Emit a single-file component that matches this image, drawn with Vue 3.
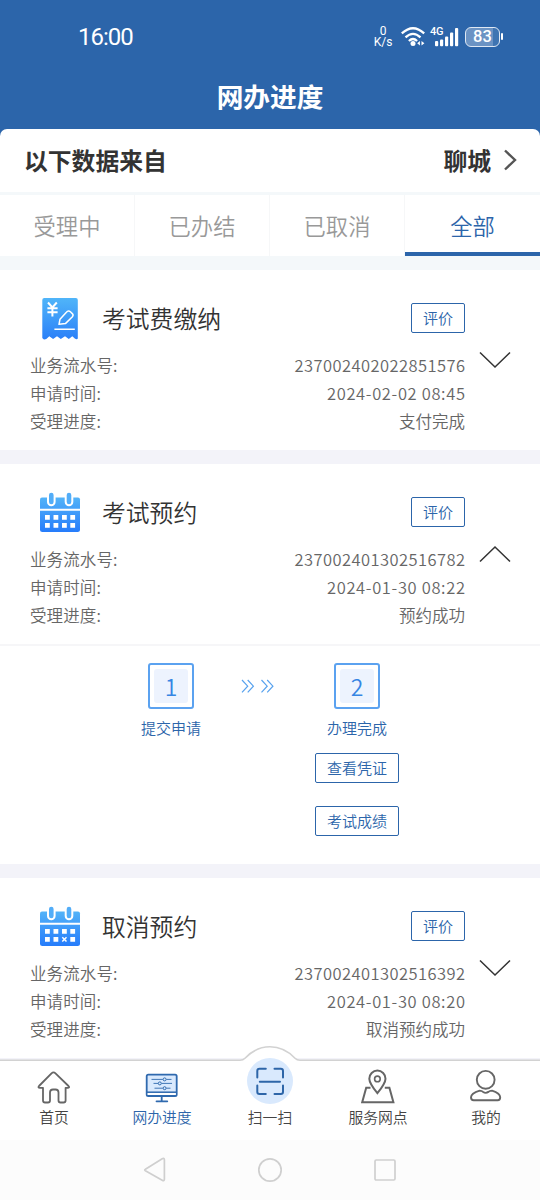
<script setup>
const tabs = ['受理中', '已办结', '已取消', '全部']
const records = [
  { title: '考试费缴纳', icon: 'receipt', no: '237002402022851576', time: '2024-02-02 08:45', status: '支付完成', open: false },
  { title: '考试预约', icon: 'calendar', no: '237002401302516782', time: '2024-01-30 08:22', status: '预约成功', open: true },
  { title: '取消预约', icon: 'cancel', no: '237002401302516392', time: '2024-01-30 08:20', status: '取消预约成功', open: false },
]
</script>

<template>
  <div class="screen">
    <header class="top">
      <div class="status">
        <span class="clock">16:00</span>
        <div class="indicators">
          <div class="speed"><span>0</span><span>K/s</span></div>
          <svg class="wifi" width="26" height="22" viewBox="0 0 26 22" fill="none" stroke="#fff" stroke-width="2.3">
            <path d="M.8 7.4Q12 -3 23.2 7.4" />
            <path d="M4.5 11.3Q12 4.4 19.5 11.3" />
            <path d="M7.9 15Q12 11 16.1 15" />
            <circle cx="12" cy="17.6" r="2.5" fill="#fff" stroke="none" />
            <path d="M16.2 17.2l2.7-2.3v4.6zM23.4 17.2l-2.9-2.3v4.6z" fill="#fff" stroke="none" />
          </svg>
          <div class="cell">
            <span class="gen">4G</span>
            <svg width="28" height="22" viewBox="0 0 28 22" fill="#fff">
              <rect x="4" y="15" width="3.2" height="5.2" rx="1" />
              <rect x="9" y="13.5" width="3.2" height="6.7" rx="1" />
              <rect x="14" y="10.5" width="3.2" height="9.7" rx="1" />
              <rect x="19" y="6.5" width="3.2" height="13.7" rx="1" />
              <rect x="24" y="2" width="3.2" height="18.2" rx="1" />
            </svg>
          </div>
          <div class="battery">83</div>
          <i class="battery-cap"></i>
        </div>
      </div>
      <h1>网办进度</h1>
    </header>

    <section class="panel">
      <div class="source">
        <span>以下数据来自</span>
        <div class="city">
          聊城
          <svg width="13" height="22" viewBox="0 0 13 22" fill="none" stroke="#555" stroke-width="2.4"><path d="M1 1.5 11 11 1 20.5" /></svg>
        </div>
      </div>
      <nav class="tabs">
        <div v-for="(t, i) in tabs" :key="t" class="tab" :class="{ active: i === 3 }">{{ t }}</div>
      </nav>
    </section>

    <main class="list">
      <article v-for="r in records" :key="r.title" class="card">
        <div class="head">
          <svg v-if="r.icon === 'receipt'" class="ico" width="42" height="44" viewBox="0 0 42 44">
            <defs><linearGradient id="g1" x1="0" y1="0" x2="0" y2="1"><stop offset="0" stop-color="#50b5f9" /><stop offset="1" stop-color="#2b80f8" /></linearGradient></defs>
            <path d="M5 1H35Q37 1 37 3V41.5Q36 43 34 41.5L31.5 39.2L28 42L24.2 39.2L20 42L16.2 39.2L12.3 42L8.5 39.2L5.5 42Q3 43 2 41.5L1.5 41V3Q1.5 1 3.5 1Z" transform="translate(.8 0)" fill="url(#g1)" />
            <g fill="none" stroke="#fff" stroke-width="2"><path d="M8 5.5 12.4 10.5 16.8 5.5M12.4 10V19.5M7.4 11.2H17.6M7.4 15.3H17.6" /></g>
            <g fill="none" stroke="#fff" stroke-width="1.5" stroke-linejoin="round"><path d="M19 27.3 20 22.2 26.4 15.2Q28.4 12.9 30.4 14.8L32.3 16.6Q33.8 18.2 32.4 19.7L25.4 26.6ZM14.4 32.2H34.8" /></g>
          </svg>
          <svg v-else class="ico" width="42" height="44" viewBox="0 0 42 44">
            <defs><linearGradient id="g2" x1="0" y1="0" x2="0" y2="1"><stop offset="0" stop-color="#53b3f8" /><stop offset="1" stop-color="#267cfb" /></linearGradient></defs>
            <path d="M2 6.5H38Q40 6.5 40 8.5V38.5Q40 41 37.5 41H2.5Q0 41 0 38.5V8.5Q0 6.5 2 6.5Z" fill="url(#g2)" />
            <path d="M0 18.8H40" stroke="#fff" stroke-width="2" />
            <path d="M11.3 4V11M29 4V11" stroke="#fff" stroke-width="8.6" stroke-linecap="round" />
            <path d="M11.3 4V11M29 4V11" stroke="#52adf8" stroke-width="4.6" stroke-linecap="round" />
            <path d="M5 24h4.8v4.8H5zM13.5 24h4.8v4.8h-4.8zM22 24h4.8v4.8H22zM30.3 24h4.8v4.8h-4.8zM5 32h4.8v4.8H5zM13.5 32h4.8v4.8h-4.8zM30.3 32h4.8v4.8h-4.8z" fill="#fff" />
            <path v-if="r.icon === 'calendar'" d="M22 32h4.8v4.8H22z" fill="#fff" />
            <path v-else d="M22.3 32.3 26.5 36.5M26.5 32.3 22.3 36.5" stroke="#fff" stroke-width="1.5" />
          </svg>
          <h2>{{ r.title }}</h2>
          <button class="btn rate">评价</button>
        </div>
        <div class="body">
          <dl>
            <div><dt>业务流水号:</dt><dd class="num">{{ r.no }}</dd></div>
            <div><dt>申请时间:</dt><dd class="date">{{ r.time }}</dd></div>
            <div><dt>受理进度:</dt><dd>{{ r.status }}</dd></div>
          </dl>
          <svg class="chev" :class="{ up: r.open }" width="32" height="18" viewBox="0 0 32 18" fill="none" stroke="#333" stroke-width="1.5"><path d="M1 1.5 16 16 31 1.5" /></svg>
        </div>
        <div v-if="r.open" class="steps">
          <div class="step">
            <div class="box"><span>1</span></div>
            <p>提交申请</p>
          </div>
          <svg class="arrows" width="34" height="15" viewBox="0 0 34 15" fill="none" stroke="#58a2ee" stroke-width="1.2">
            <path d="M1 1 6.7 7.2 1 13.4M6.7 1 12.4 7.2 6.7 13.4M20.5 1 26.2 7.2 20.5 13.4M26.2 1 31.9 7.2 26.2 13.4" />
          </svg>
          <div class="step">
            <div class="box"><span>2</span></div>
            <p>办理完成</p>
            <button class="btn wide">查看凭证</button>
            <button class="btn wide">考试成绩</button>
          </div>
        </div>
      </article>
    </main>

    <footer class="bar">
      <svg class="edge" width="540" height="18" viewBox="0 0 540 18"><path d="M0 15.2H240Q243 15.2 245 13.2Q256 1.8 270 1.8T295 13.2Q297 15.2 300 15.2H540V18H0Z" fill="#fff" /><path d="M0 15.2H240Q243 15.2 245 13.2Q256 1.8 270 1.8T295 13.2Q297 15.2 300 15.2H540" fill="none" stroke="#d2d2d2" stroke-width="1.6" /></svg>
      <div class="item">
        <svg width="36" height="36" viewBox="0 0 36 36" fill="none" stroke="#666" stroke-width="1.8" stroke-linejoin="round"><path d="M3 18 15.5 5.3Q17.5 3.4 19.5 5.3L32.5 18Q34 19.6 32 19.8H29.6V32.5Q29.6 34.5 27.5 34.5H24.5Q22.5 34.5 22.5 32.5V24.5Q22.5 21.5 19.5 21.5H17Q14 21.5 14 24.5V32.5Q14 34.5 12 34.5H9Q7 34.5 7 32.5V19.8H4Q1.5 19.6 3 18Z" /></svg>
        <span>首页</span>
      </div>
      <div class="item on">
        <svg width="36" height="36" viewBox="0 0 36 36" fill="none" stroke="#2f69ae" stroke-width="1.5"><g transform="translate(0 1)"><rect x="2.7" y="5.7" width="30" height="21.3" rx="1.6" fill="#d9e9fd" stroke-width="1.8" /><path d="M3 23.2H32.5" stroke-width="1.5" /><path d="M3.7 24H31.7V26H3.7Z" fill="#fff" stroke="none" /><path d="M17.7 27V32.2M12.5 32.3H23.3" stroke-width="1.8" stroke-linecap="round" /><path d="M7.5 10.4H18.8M22.4 10.4H27.5M9.5 14.4H14M17.6 14.4H28M10.5 19.2H18.8M22.4 19.2H26.5" stroke-width=".9" /><g stroke-width="1"><circle cx="20.6" cy="10.4" r="1.5" /><circle cx="15.8" cy="14.4" r="1.5" /><circle cx="20.6" cy="19.2" r="1.5" /></g></g></svg>
        <span>网办进度</span>
      </div>
      <div class="item scan">
        <svg width="46" height="46" viewBox="0 0 46 46" fill="none" stroke="#2d65a8" stroke-width="2" stroke-linecap="round"><circle cx="23" cy="23" r="23" fill="#d9e9fd" stroke="none" /><path d="M10.3 19.5V13Q10.3 10.8 12.5 10.8H18.8M27.5 10.8H33.8Q36 10.8 36 13V19.5M10.3 27.5V34Q10.3 36 12.5 36H18.8M27.5 36H33.8Q36 36 36 34V27.5M12.8 23.8H33" /></svg>
        <span>扫一扫</span>
      </div>
      <div class="item">
        <svg width="36" height="36" viewBox="0 0 36 36" fill="none" stroke="#666" stroke-width="2"><g transform="translate(0 .7)"><path d="M10.5 19H6.2L2.2 33.5H33.4L29.4 19H24.8" /><path d="M17.4 24.5Q9.3 14.5 9.3 10A8.1 8.1 0 0 1 25.5 10Q25.5 14.5 17.4 24.5Z" /><circle cx="17.4" cy="10.2" r="2.8" stroke-width="1.6" /></g></svg>
        <span>服务网点</span>
      </div>
      <div class="item">
        <svg width="36" height="36" viewBox="0 0 36 36" fill="none" stroke="#666" stroke-width="1.9" stroke-linejoin="round"><g transform="translate(-.3 .8)"><circle cx="18" cy="11" r="8.9" /><path d="M12 21.8Q14 21.8 15.4 23.1Q18 25 20.7 23.1Q22 21.8 24.3 21.8Q32.5 24.5 32.5 28.5Q32.5 31.5 30 31.5H6Q3.3 31.5 3.3 28.5Q3.3 24.5 12 21.8Z" /></g></svg>
        <span>我的</span>
      </div>
    </footer>

    <div class="sys">
      <svg width="24" height="26" viewBox="0 0 24 26"><path d="M2.4 12.2 19.2 1.8Q21.4 .7 21.4 3V22Q21.4 24.4 19.2 23.2L2.4 13.8Q1 13 2.4 12.2Z" /></svg>
      <svg width="26" height="26" viewBox="0 0 26 26"><circle cx="13" cy="13" r="11.2" /></svg>
      <svg width="24" height="26" viewBox="0 0 24 26"><rect x="2" y="3" width="20" height="20" rx="1.2" /></svg>
    </div>
  </div>
</template>

<style>
body { margin: 0; background: #fff; }
</style>

<style scoped>
* { box-sizing: border-box; }
h1, h2, p, dl, dt, dd { margin: 0; font-weight: inherit; }
svg { display: block; flex: none; }
.screen { width: 540px; height: 1200px; overflow: hidden; display: flex; flex-direction: column; background: #f3f3f9; font-family: "Noto Sans CJK SC", sans-serif; font-weight: 350; }
.top { flex: none; height: 129px; background: #2c65aa; color: #fff; }
.status { height: 73px; padding: 0 37px 0 78px; display: flex; align-items: center; justify-content: space-between; }
.clock { font: 400 24px/30px Roboto, sans-serif; letter-spacing: -1px; }
.indicators { display: flex; align-items: center; }
.speed { width: 22px; margin-right: 7px; display: flex; flex-direction: column; align-items: center; font: 400 12px/11px Roboto, sans-serif; }
.speed span { height: 11px; }
.wifi { margin-right: 4px; }
.cell { position: relative; margin-right: 6px; }
.gen { position: absolute; left: -1px; top: 0; font: 500 11px/12px Roboto, sans-serif; letter-spacing: -.3px; }
.battery { width: 35px; height: 20px; border: 1.5px solid #dfe8f4; border-radius: 6px; background: linear-gradient(90deg, #6b93c4 82%, #3f74b2 82%); display: flex; align-items: center; justify-content: center; font: 500 16.5px/18px Roboto, sans-serif; padding-top: 1px; }
.battery-cap { width: 2px; height: 7px; margin-left: 1px; border-radius: 1px; background: #fff; }
h1 { text-align: center; font-size: 26.7px; line-height: 40px; padding-top: 3px; font-weight: 700; }
.panel { flex: none; height: 127px; background: linear-gradient(#2c65aa 0 8px, #f4f8fa 8px); }
.source { height: 63px; padding: 0 23px 0 24px; background: #fff; border-radius: 7px 7px 0 0; display: flex; align-items: center; justify-content: space-between; font-size: 23.8px; line-height: 34px; font-weight: 700; color: #333; }
.city { height: 34px; display: flex; align-items: center; gap: 13px; margin-top: -1px; }
.source > span { margin-top: -1px; }
.tabs { margin-top: 3px; height: 61px; display: grid; grid-template-columns: repeat(4, 1fr); background: #fff; }
.tab { display: flex; align-items: center; justify-content: center; padding-bottom: 2px; font-size: 22.3px; color: #999; border-right: 1px solid #f6f7f8; }
.tab.active { color: #2c65aa; border-right: 0; border-bottom: 4px solid #2c65aa; padding: 2px 0 0; }
.list { border-top: 14px solid #f4f8fa; flex: 1; min-height: 0; display: flex; flex-direction: column; gap: 14px; }
.card { flex: none; background: #fff; }
.head { height: 81px; padding: 15px 75px 0 40px; display: flex; align-items: center; }
.ico { margin-top: 2px; }
h2 { margin: -1px 0 0 20px; flex: 1; font-size: 23.8px; line-height: 36px; color: #333; }
.btn { padding: 0; border: 1px solid #2c65aa; border-radius: 2px; background: #fff; color: #2c65aa; font: 350 15px/26px "Noto Sans CJK SC", sans-serif; height: 30px; }
.rate { width: 54px; }
.body { height: 99px; padding-left: 30px; display: flex; align-items: flex-start; }
dl { width: 435px; }
dl div { height: 28px; display: flex; justify-content: space-between; font-size: 16.5px; line-height: 28px; color: #666; }
dt { letter-spacing: .1px; }
.num { letter-spacing: .44px; margin-right: -.44px; }
.date { letter-spacing: .66px; margin-right: -.66px; }
.chev { margin: 0 0 0 14px; }
.chev.up { transform: rotate(180deg); }
.steps { height: 220px; border-top: 2px solid #f6f6f8; padding: 17px 0 0 78px; display: flex; align-items: flex-start; }
.step { width: 186px; display: flex; flex-direction: column; align-items: center; }
.arrows { margin: 16px -11px 0 -23px; }
.box { width: 46px; height: 46px; padding: 4px; border: 2px solid #5ba2f0; border-radius: 3px; }
.box span { display: block; height: 100%; border-radius: 3px; background: #edf3fe; color: #3685e3; text-align: center; font-size: 23px; line-height: 34px; }
.step p { margin-top: 8px; font-size: 15px; line-height: 22px; color: #2c65aa; }
.wide { width: 84px; margin-top: 14px; }
.wide + .wide { margin-top: 23px; }
.bar { flex: none; position: relative; height: 80px; display: grid; grid-template-columns: repeat(5, 1fr); background: #fff; }
.edge { position: absolute; left: 0; top: -15px; }
.item { position: relative; padding-top: 8px; display: flex; flex-direction: column; align-items: center; font-size: 14.8px; line-height: 20px; color: #444; }
.item span { margin-top: 3px; }
.on { color: #2c65aa; }
.scan { padding-top: 0; }
.scan svg { margin-top: -2px; }
.sys { flex: none; height: 60px; padding: 0 143px; background: #fcfcfc; display: flex; align-items: center; justify-content: space-between; }
.sys svg { fill: none; stroke: #cfcfcf; stroke-width: 1.7; }
</style>
